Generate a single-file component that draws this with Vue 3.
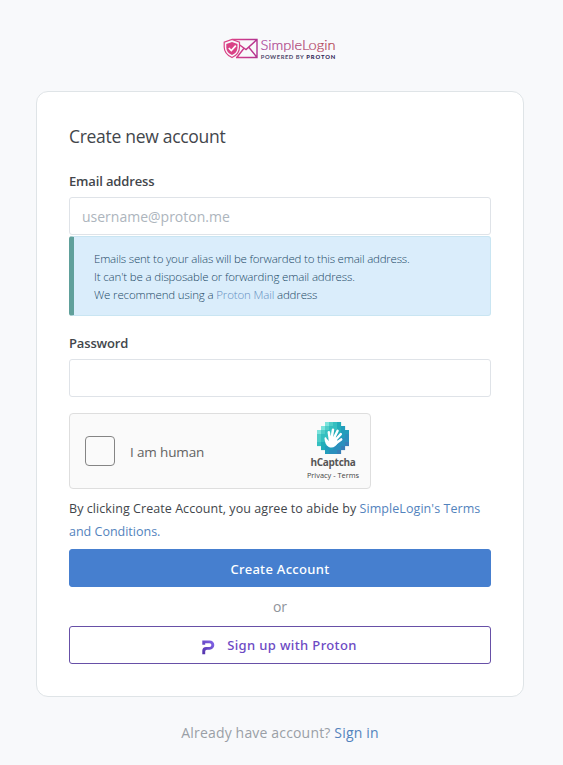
<script setup>
import { ref } from 'vue'

const email = ref('')
const password = ref('')
const human = ref(false)

// Grid of 8x8 tiles behind the captcha hand; dots are transparent.
const rows = ['..abcd..', '.abccde.', 'abccddee', 'bccddeef', 'bcddeeff', 'cddeeffg', '.deeffg.', '..effg..']
const palette = { a: '#7ce3dc', b: '#4fcdc8', c: '#34bfc0', d: '#22adb9', e: '#229dbc', f: '#2b8fbd', g: '#397fb8' }
const tiles = rows.flatMap((row, y) =>
  [...row].map((key, x) => ({ x: x * 4, y: y * 4, fill: palette[key] })).filter((tile) => tile.fill)
)
</script>

<template>
  <main class="page">
    <svg class="logo" width="114" height="26" viewBox="0 0 114 26" aria-label="SimpleLogin">
      <defs>
        <linearGradient id="mark" x1="0" x2="1">
          <stop offset="0" stop-color="#dd3f86" />
          <stop offset="1" stop-color="#b23391" />
        </linearGradient>
        <linearGradient id="word" x1="0" x2="1">
          <stop offset="0" stop-color="#a83d9b" />
          <stop offset="1" stop-color="#b3404a" />
        </linearGradient>
      </defs>
      <path d="M9 4.5H34V22.5H13M9.5 4.8L23 14.5L33.7 4.8M14 22.2L21 13.2M26 12.5L33.8 22.2" fill="none" stroke="url(#mark)" stroke-width="1.4" />
      <path d="M9 4.5L16.5 7.2V12C16.5 17 13.5 20.5 9 22.5C4.5 20.5 1.2 17 1.2 12V7.2Z" fill="#f8f9fb" stroke="#d94185" stroke-width="1.2" />
      <path d="M9 7L14.5 9V12.4C14.5 16 12.3 18.6 9 20.1C5.7 18.6 3.3 16 3.3 12.4V9Z" fill="#d94185" />
      <path d="M5.8 13L8.3 15.5L12.8 10.7" fill="none" stroke="#fff" stroke-width="1.7" />
      <text class="word" x="37.5" y="14.6" textLength="75" lengthAdjust="spacingAndGlyphs">SimpleLogin</text>
      <text class="tag" x="37.8" y="23.8" textLength="43" lengthAdjust="spacing">POWERED BY</text>
      <text class="tag strong" x="83.3" y="23.8" textLength="29" lengthAdjust="spacing">PROTON</text>
    </svg>

    <form class="card" @submit.prevent>
      <h1 class="title"><span>Create new account</span></h1>
      <label class="label" for="email">Email address</label>
      <input id="email" v-model="email" class="field" type="email" placeholder="username@proton.me" />
      <div class="notice">
        <p class="wide">Emails sent to your alias will be forwarded to this email address.</p>
        <p>It can't be a disposable or forwarding email address.</p>
        <p>We recommend using a <a>Proton Mail</a> address</p>
      </div>
      <label class="label password" for="password">Password</label>
      <input id="password" v-model="password" class="field" type="password" />

      <div class="captcha">
        <button class="check" type="button" role="checkbox" :aria-checked="human" @click="human = !human"></button>
        <span class="human">I am human</span>
        <div class="brand">
          <svg width="32" height="32" viewBox="0 0 32 32">
            <rect v-for="tile in tiles" :key="`${tile.x}-${tile.y}`" :x="tile.x" :y="tile.y" width="4.1" height="4.1" :fill="tile.fill" />
            <path d="M13 18L11.8 10.2M14.5 17L16 7.8M16.5 17L20.6 8.8M17.5 19L23.8 12.2M18 22L24.2 17.4" fill="none" stroke="#fff" stroke-linecap="round" stroke-width="2.5" />
            <path d="M11.8 16L18.5 15L21.2 20C19.5 24.5 15.5 26.8 11.8 25C8.8 23.4 7.8 20 7.5 16.6C7.5 14.8 9.2 14.8 9.6 16.4L11.8 19Z" fill="#fff" />
          </svg>
          <b>hCaptcha</b>
          <small>Privacy - Terms</small>
        </div>
      </div>

      <p class="terms">
        <span class="agree">By clicking Create Account, you agree to abide by <a>SimpleLogin's Terms</a></span><br />
        <a>and Conditions.</a>
      </p>
      <button class="button primary" type="submit"><span>Create Account</span></button>
      <div class="or">or</div>
      <button class="button proton" type="button">
        <svg width="13" height="15" viewBox="0 0 13 15">
          <defs>
            <linearGradient id="proton" x1="0" y1="1" x2="1" y2="0">
              <stop offset="0" stop-color="#5131a8" />
              <stop offset="1" stop-color="#8669ed" />
            </linearGradient>
          </defs>
          <path d="M0.3 0.5H7.7A4.6 4.6 0 0 1 7.7 9.7H4.9Q3.2 9.7 3.2 11.4V14.3H0.3V10.8Q0.3 7 4.1 7H7.5A1.9 1.9 0 0 0 7.5 3.2H3.2V4.8H0.3Z" fill="url(#proton)" />
        </svg>
        <span>Sign up with Proton</span>
      </button>
    </form>
    <p class="signin">Already have account? <a>Sign in</a></p>
  </main>
</template>

<style>
body { background: #f8f9fb; }
</style>

<style scoped>
* { box-sizing: border-box; }
.page { height: 765px; overflow: hidden; display: flex; flex-direction: column; align-items: center; padding: 35px 3px 0 0; font-family: "Open Sans", "Noto Sans", sans-serif; color: #42464b; background: #f8f9fb; }
.logo { display: block; margin: 0 0 30px; flex: none; overflow: visible; }
.word { font-family: Lato, sans-serif; font-size: 14px; font-weight: 300; fill: url(#word); stroke: url(#word); stroke-width: 0.2px; }
.tag { font-family: Lato, sans-serif; font-size: 5.8px; font-weight: 700; fill: #4b4669; }
.tag.strong { font-weight: 900; fill: #2d2656; }
.card { width: 488px; height: 606px; flex: none; padding: 28px 32px; border: 1px solid #dfe4e7; border-radius: 12px; background: #fff; display: flex; flex-direction: column; }
.title { margin: 0; height: 32px; font-size: 17.5px; line-height: 32px; font-weight: 400; letter-spacing: -0.3px; }
.label { margin-top: 18px; height: 27px; font-size: 13px; line-height: 23px; font-weight: 600; letter-spacing: -0.15px; }
.label.password { margin-top: 16px; }
.field { width: 100%; height: 38px; flex: none; padding: 0 12px; border: 1px solid #dfe3e8; border-radius: 3px; font: 400 14px "Open Sans", sans-serif; outline: 0; }
.field::placeholder { color: #adb5bd; opacity: 1; }
a { color: #5383bd; }
.notice { height: 80px; flex: none; margin-top: 1px; padding: 13px 0 0 20px; border: 1px solid #c9e5f2; border-left: 5px solid #60a09b; border-radius: 3px; background: #daedfb; color: #234a67; font-size: 11.5px; font-weight: 300; letter-spacing: -0.15px; white-space: nowrap; }
.notice p { margin: 0; line-height: 18px; }
.notice .wide { letter-spacing: -0.2px; }
.notice a { color: #6690c2; }
.captcha { width: 302px; height: 76px; margin-top: 16px; flex: none; display: flex; align-items: center; border: 1px solid #dedede; border-radius: 4px; background: #fafafa; padding-left: 15px; }
.check { width: 30px; height: 30px; margin: 0; padding: 0; border: 1px solid #858585; border-radius: 4px; background: #fafafa; }
.human { margin: 2px 0 0 15px; font-size: 13.5px; letter-spacing: -0.15px; color: #626262; }
.brand { margin-left: auto; width: 74px; height: 74px; padding-top: 8px; display: flex; flex-direction: column; align-items: center; color: #555; }
.brand svg { flex: none; }
.brand b { font-size: 10px; line-height: 16px; letter-spacing: -0.3px; white-space: nowrap; }
.brand small { font-size: 7.4px; line-height: 10px; white-space: nowrap; color: #444; }
.terms { margin: 8px 0 0; height: 52px; font-size: 12.5px; line-height: 23px; white-space: nowrap; }
.agree { letter-spacing: 0.062px; }
.button { height: 38px; width: 100%; flex: none; border-radius: 3px; font: 500 13px "Noto Sans", sans-serif; display: flex; align-items: center; justify-content: center; padding: 0; }
.primary { border: 1px solid #467fcf; background: #467fcf; color: #fff; padding-top: 2px; letter-spacing: 0.3px; }
.or { height: 39px; line-height: 39px; font-size: 14px; text-align: center; color: #90949b; }
.proton { border: 1px solid #6750a7; background: #fff; color: #6d4ac4; gap: 12px; letter-spacing: 0.37px; padding-right: 1px; }
.proton svg { margin-top: 4px; }
.signin { margin: 24px 0 0; line-height: 24px; font-size: 14px; letter-spacing: 0.17px; color: #9a9fa6; white-space: nowrap; }
</style>
